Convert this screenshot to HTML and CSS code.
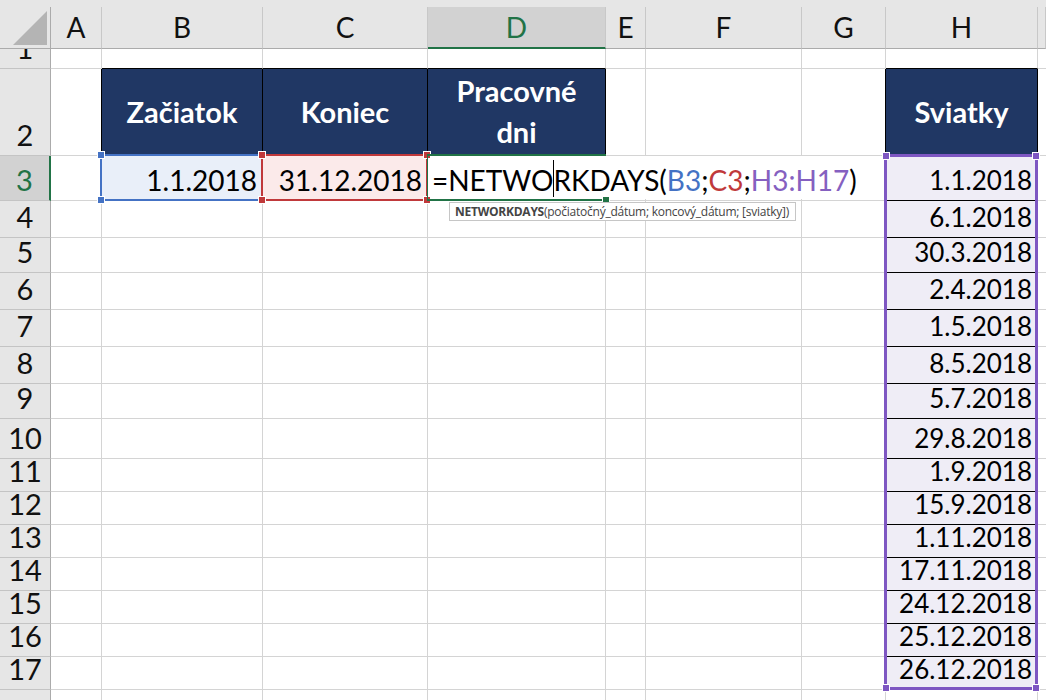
FILE: index.html
```html
<!DOCTYPE html>
<html>
<head>
	<title>NETWORKDAYS</title>
	<link rel="stylesheet" href="styles.css">
</head>
<body>
	<div class='sheet'>
		<div class='row head'>
			<div class='ch corner'><svg width='50' height='41' viewBox='0 7 50 41'><polygon points='13,45 47,45 47,11' fill='#b4b4b4'/></svg></div>
			<div class='ch'>A</div><div class='ch'>B</div><div class='ch'>C</div><div class='ch sel'>D</div><div class='ch'>E</div><div class='ch'>F</div><div class='ch'>G</div><div class='ch'>H</div><div class='ch'></div>
		</div>
		<div class='row h20'><div class='c rh clip'>1</div><div class='c'></div><div class='c kb'></div><div class='c kb'></div><div class='c kb'></div><div class='c'></div><div class='c'></div><div class='c'></div><div class='c kb'></div><div class='c'></div></div>
		<div class='row h87'><div class='c rh'>2</div><div class='c kr'></div><div class='c hd'>Začiatok</div><div class='c hd'>Koniec</div><div class='c hd'>Pracovné<br>dni</div><div class='c'></div><div class='c'></div><div class='c kr'></div><div class='c hd'>Sviatky</div><div class='c'></div></div>
		<div class='row h45'><div class='c rh sel'>3</div><div class='c'></div><div class='c fb'>1.1.2018</div><div class='c fr'>31.12.2018</div><div class='c'></div><div class='c'></div><div class='c'></div><div class='c'></div><div class='c hol'>1.1.2018</div><div class='c'></div></div>
		<div class='row h37'><div class='c rh'>4</div><div class='c'></div><div class='c'></div><div class='c'></div><div class='c'></div><div class='c'></div><div class='c'></div><div class='c'></div><div class='c hol'>6.1.2018</div><div class='c'></div></div>
		<div class='row h35'><div class='c rh'>5</div><div class='c'></div><div class='c'></div><div class='c'></div><div class='c'></div><div class='c'></div><div class='c'></div><div class='c'></div><div class='c hol'>30.3.2018</div><div class='c'></div></div>
		<div class='row h37'><div class='c rh'>6</div><div class='c'></div><div class='c'></div><div class='c'></div><div class='c'></div><div class='c'></div><div class='c'></div><div class='c'></div><div class='c hol'>2.4.2018</div><div class='c'></div></div>
		<div class='row h37'><div class='c rh'>7</div><div class='c'></div><div class='c'></div><div class='c'></div><div class='c'></div><div class='c'></div><div class='c'></div><div class='c'></div><div class='c hol'>1.5.2018</div><div class='c'></div></div>
		<div class='row h37'><div class='c rh'>8</div><div class='c'></div><div class='c'></div><div class='c'></div><div class='c'></div><div class='c'></div><div class='c'></div><div class='c'></div><div class='c hol'>8.5.2018</div><div class='c'></div></div>
		<div class='row h35'><div class='c rh'>9</div><div class='c'></div><div class='c'></div><div class='c'></div><div class='c'></div><div class='c'></div><div class='c'></div><div class='c'></div><div class='c hol'>5.7.2018</div><div class='c'></div></div>
		<div class='row h40'><div class='c rh'>10</div><div class='c'></div><div class='c'></div><div class='c'></div><div class='c'></div><div class='c'></div><div class='c'></div><div class='c'></div><div class='c hol'>29.8.2018</div><div class='c'></div></div>
		<div class='row h33'><div class='c rh'>11</div><div class='c'></div><div class='c'></div><div class='c'></div><div class='c'></div><div class='c'></div><div class='c'></div><div class='c'></div><div class='c hol'>1.9.2018</div><div class='c'></div></div>
		<div class='row h33'><div class='c rh'>12</div><div class='c'></div><div class='c'></div><div class='c'></div><div class='c'></div><div class='c'></div><div class='c'></div><div class='c'></div><div class='c hol'>15.9.2018</div><div class='c'></div></div>
		<div class='row h33'><div class='c rh'>13</div><div class='c'></div><div class='c'></div><div class='c'></div><div class='c'></div><div class='c'></div><div class='c'></div><div class='c'></div><div class='c hol'>1.11.2018</div><div class='c'></div></div>
		<div class='row h33'><div class='c rh'>14</div><div class='c'></div><div class='c'></div><div class='c'></div><div class='c'></div><div class='c'></div><div class='c'></div><div class='c'></div><div class='c hol'>17.11.2018</div><div class='c'></div></div>
		<div class='row h33'><div class='c rh'>15</div><div class='c'></div><div class='c'></div><div class='c'></div><div class='c'></div><div class='c'></div><div class='c'></div><div class='c'></div><div class='c hol'>24.12.2018</div><div class='c'></div></div>
		<div class='row h33'><div class='c rh'>16</div><div class='c'></div><div class='c'></div><div class='c'></div><div class='c'></div><div class='c'></div><div class='c'></div><div class='c'></div><div class='c hol'>25.12.2018</div><div class='c'></div></div>
		<div class='row h33'><div class='c rh'>17</div><div class='c'></div><div class='c'></div><div class='c'></div><div class='c'></div><div class='c'></div><div class='c'></div><div class='c'></div><div class='c hol'>26.12.2018</div><div class='c'></div></div>
		<div class='row h33'><div class='c rh'></div><div class='c'></div><div class='c'></div><div class='c'></div><div class='c'></div><div class='c'></div><div class='c'></div><div class='c'></div><div class='c'></div><div class='c'></div></div>

		<!-- formula being typed in D3 -->
		<div class='edit'>=NETWO<span class='caret'></span>RKDAYS(<span class='f-b'>B3</span>;<span class='f-r'>C3</span>;<span class='f-p'>H3:H17</span>)</div>

		<div class='range blue'><i class='tl'></i><i class='bl'></i></div>
		<div class='range red'><i class='tl'></i><i class='tr'></i><i class='bl'></i><i class='br'></i></div>
		<div class='range purple'><i class='tl'></i><i class='tr'></i><i class='bl'></i><i class='br'></i></div>
		<div class='active'><i class='handle'></i></div>

		<div class='tip'><b>NETWORKDAYS</b>(počiatočný_dátum; koncový_dátum; [sviatky])</div>
	</div>
</body>
</html>
```

FILE: styles.css
```css
body {
	margin: 0;
	background-color: #fff;
	font-family: Lato, "Open Sans", sans-serif;
	overflow: hidden;
}

.sheet {
	position: relative;
	width: 1046px;
	height: 700px;
	overflow: hidden;
}

.row {
	display: grid;
	grid-template-columns: 51px 51px 161px 165px 178px 40px 156px 84px 152px 1fr;
	grid-template-rows: 100%;
}

.head {
	height: 49px;
	padding-top: 7px;
	box-sizing: border-box;
	background-color: #e6e6e6;
}

.h20 { height: 20px; }
.h33 { height: 33px; }
.h35 { height: 35px; }
.h37 { height: 37px; }
.h40 { height: 40px; }
.h45 { height: 45px; }
.h87 { height: 87px; }

.ch {
	display: flex;
	align-items: center;
	justify-content: center;
	border-right: 1px solid #c8c8c8;
	border-bottom: 1px solid #ababab;
	font-size: 28px;
	color: #111;
	padding-bottom: 1px;
}

.ch.corner {
	border-right-color: #ababab;
	position: relative;
}

.ch.corner svg {
	position: absolute;
	left: 0;
	top: 0;
}

.ch.sel {
	background-color: #d2d2d2;
	color: #217346;
	border-bottom: 2px solid #217346;
}

.c {
	box-sizing: border-box;
	min-height: 0;
	display: flex;
	align-items: flex-end;
	justify-content: flex-end;
	padding: 0 5px 3px;
	border-right: 1px solid #d4d4d4;
	border-bottom: 1px solid #d4d4d4;
	font-size: 28px;
	line-height: 34px;
	white-space: nowrap;
	color: #000;
}

.rh {
	justify-content: center;
	background-color: #e6e6e6;
	border-right-color: #ababab;
	border-bottom-color: #c4c4c4;
	color: #111;
	padding: 0 0 3px;
	font-size: 29px;
	line-height: 35px;
}

.clip {
	overflow: hidden;
}

.rh.sel {
	background-color: #d2d2d2;
	color: #217346;
	border-right: 2px solid #217346;
}

.kb { border-bottom-color: #000; }
.kr { border-right-color: #000; }

.hd {
	background-color: #203764;
	color: #fff;
	font-weight: 700;
	font-size: 29px;
	justify-content: center;
	align-items: center;
	text-align: center;
	white-space: normal;
	line-height: 41px;
	padding: 0 0 2px;
	border-right-color: #000;
	border-bottom-color: #000;
}

.fb { background-color: #e9eff9; }
.fr { background-color: #fbeaea; }

.hol {
	background-color: #efedf6;
	border-bottom-color: #000;
	font-size: 26px;
	line-height: 32px;
	padding-bottom: 4px;
}

.edit {
	position: absolute;
	left: 428px;
	top: 156px;
	width: 457px;
	height: 43px;
	box-sizing: border-box;
	background-color: #fff;
	padding: 0 0 2px 4px;
	display: flex;
	align-items: flex-end;
	font-size: 28px;
	line-height: 34px;
	white-space: nowrap;
}

.caret {
	display: inline-block;
	width: 1px;
	height: 37px;
	background-color: #000;
	vertical-align: -8px;
	margin-right: -1px;
}

.f-b { color: #4472c4; }
.f-r { color: #c0393b; }
.f-p { color: #8560c0; }

.range {
	position: absolute;
	box-sizing: border-box;
	border: 2px solid currentColor;
}

.range i,
.active i {
	position: absolute;
	width: 6px;
	height: 6px;
	background-color: currentColor;
	box-shadow: 0 0 0 1px #fff;
}

.range .tl { left: -4px; top: -4px; }
.range .tr { right: -4px; top: -4px; }
.range .bl { left: -4px; bottom: -4px; }
.range .br { right: -4px; bottom: -4px; }

.blue {
	color: #4472c4;
	left: 100px;
	top: 154px;
	width: 163px;
	height: 47px;
}

.red {
	color: #c0393b;
	left: 261px;
	top: 154px;
	width: 167px;
	height: 47px;
}

.purple {
	color: #7e57c2;
	left: 884px;
	top: 154px;
	width: 154px;
	height: 536px;
	border-width: 3px;
}

.active {
	position: absolute;
	box-sizing: border-box;
	left: 427px;
	top: 154px;
	width: 179px;
	height: 47px;
	color: #217346;
	border: 2px solid #217346;
	border-left-width: 1px;
	border-right: none;
}

.active .handle {
	right: -3px;
	bottom: -4px;
}

.tip {
	position: absolute;
	left: 449px;
	top: 202px;
	height: 19px;
	box-sizing: border-box;
	padding: 0 6px 0 5px;
	border: 1px solid #c6c6c6;
	background-color: #fff;
	font-family: "Open Sans", sans-serif;
	font-size: 12px;
	letter-spacing: -0.25px;
	line-height: 17px;
	color: #444;
	white-space: nowrap;
}
```
